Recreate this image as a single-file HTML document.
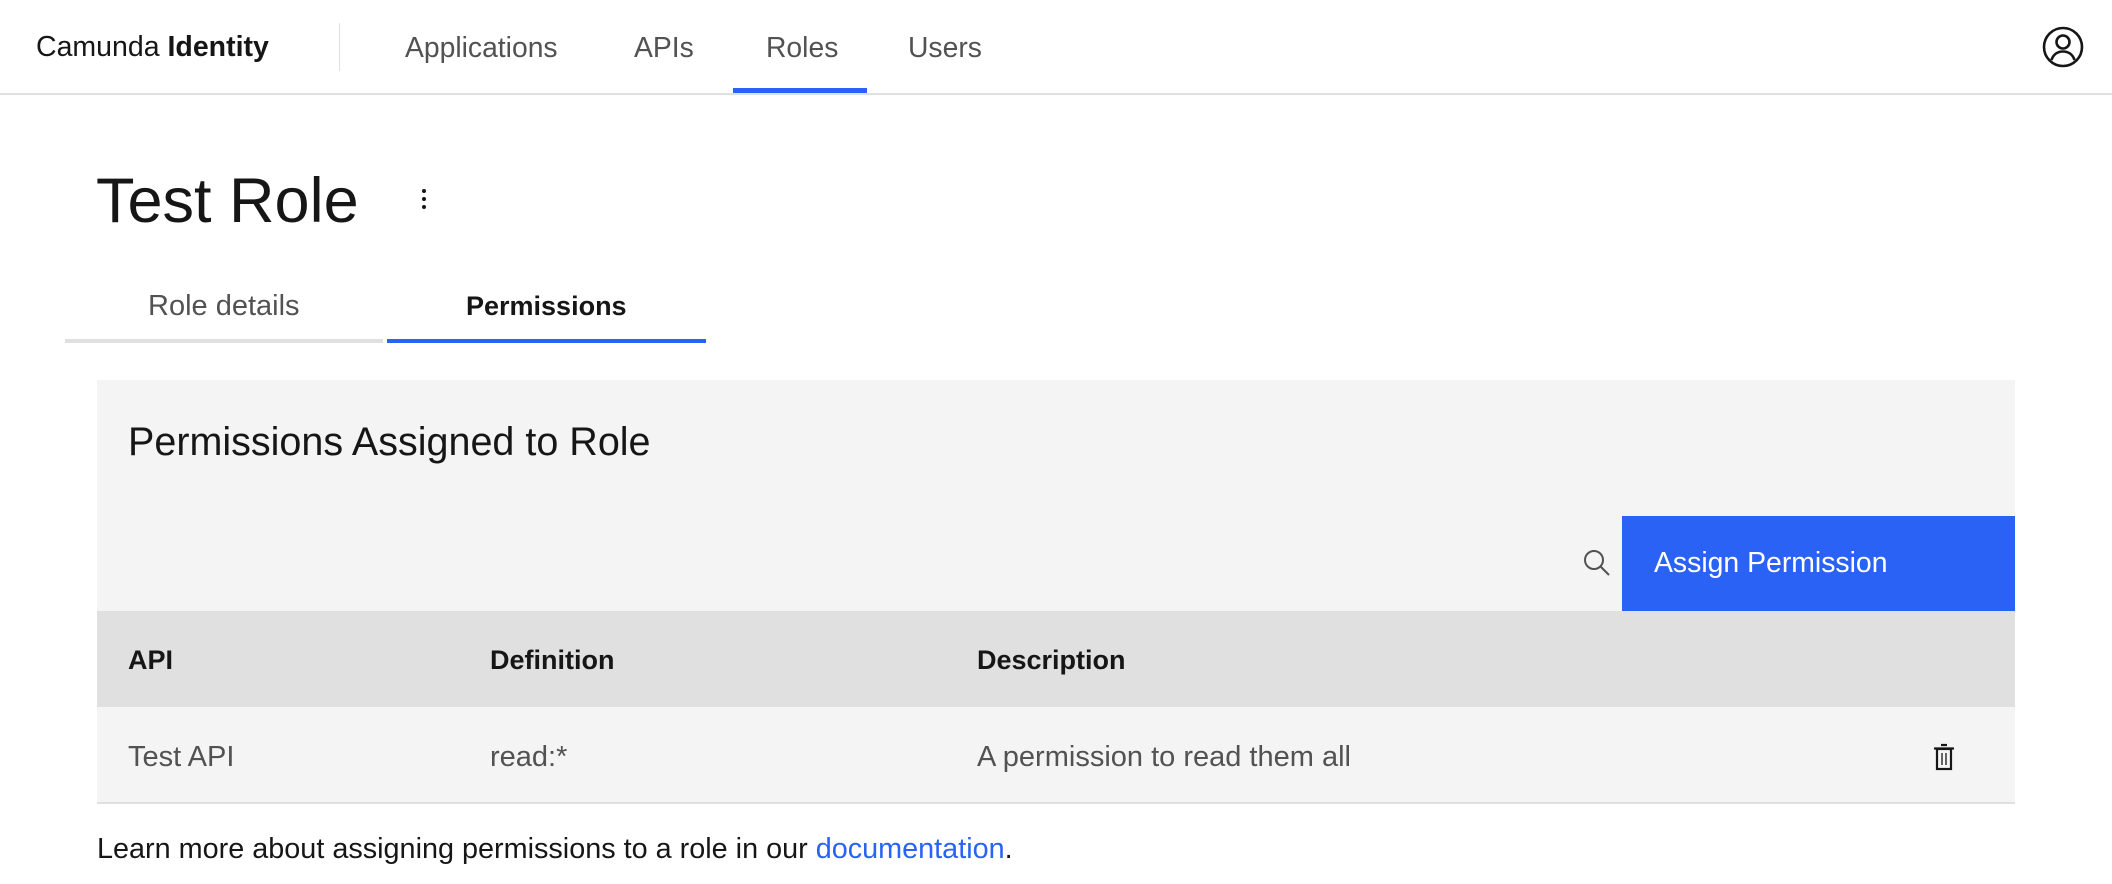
<!DOCTYPE html>
<html><head><meta charset="utf-8"><style>
*{margin:0;padding:0;box-sizing:border-box}
body{width:2112px;height:884px;background:#fff;font-family:"Liberation Sans",sans-serif;color:#161616;position:relative;overflow:hidden}
.a{position:absolute;white-space:nowrap;line-height:1}
.nav{font-size:28.3px;color:#525252;top:33px}
</style></head><body>
<div class="a" style="left:0;top:93px;width:2112px;height:2px;background:#e0e0e0"></div>
<div class="a" style="left:36px;top:33px;font-size:28.5px">Camunda <b>Identity</b></div>
<div class="a" style="left:339px;top:23px;width:1px;height:48px;background:#e0e0e0"></div>
<div class="a nav" style="left:405px">Applications</div>
<div class="a nav" style="left:634px">APIs</div>
<div class="a nav" style="left:766px">Roles</div>
<div class="a nav" style="left:908px">Users</div>
<div class="a" style="left:733px;top:88px;width:134px;height:5px;background:#2962f5"></div>
<svg class="a" style="left:2042px;top:26px" width="42" height="42" viewBox="0 0 42 42"><circle cx="21" cy="21" r="19" fill="none" stroke="#161616" stroke-width="2.6"/><circle cx="21" cy="16" r="6.5" fill="none" stroke="#161616" stroke-width="2.6"/><path d="M9.5 34c2-6 6.5-8.5 11.5-8.5s9.5 2.5 11.5 8.5" fill="none" stroke="#161616" stroke-width="2.6"/></svg>
<div class="a" style="left:96px;top:170px;font-size:63px">Test Role</div>
<svg class="a" style="left:418px;top:188px" width="12" height="24"><circle cx="6" cy="3" r="2" fill="#161616"/><circle cx="6" cy="11" r="2" fill="#161616"/><circle cx="6" cy="19" r="2" fill="#161616"/></svg>
<div class="a" style="left:148px;top:292px;font-size:29px;color:#525252">Role details</div>
<div class="a" style="left:466px;top:293px;font-size:27px;font-weight:bold">Permissions</div>
<div class="a" style="left:65px;top:339px;width:318px;height:4px;background:#e0e0e0"></div>
<div class="a" style="left:387px;top:339px;width:319px;height:4px;background:#2962f5"></div>
<div class="a" style="left:97px;top:380px;width:1918px;height:424px;background:#f4f4f4"></div>
<div class="a" style="left:128px;top:423px;font-size:39.5px">Permissions Assigned to Role</div>
<svg class="a" style="left:1582px;top:548px" width="30" height="30" viewBox="0 0 30 30"><circle cx="12" cy="12" r="9" fill="none" stroke="#525252" stroke-width="2"/><path d="M18.5 18.5L27 27" stroke="#525252" stroke-width="2"/></svg>
<div class="a" style="left:1622px;top:516px;width:393px;height:95px;background:#2962f5"></div>
<div class="a" style="left:1654px;top:549px;font-size:28.4px;color:#fff">Assign Permission</div>
<div class="a" style="left:97px;top:611px;width:1918px;height:96px;background:#e0e0e0"></div>
<div class="a" style="left:128px;top:647px;font-size:27px;font-weight:bold">API</div>
<div class="a" style="left:490px;top:647px;font-size:27px;font-weight:bold">Definition</div>
<div class="a" style="left:977px;top:647px;font-size:27px;font-weight:bold">Description</div>
<div class="a" style="left:97px;top:802px;width:1918px;height:2px;background:#e0e0e0"></div>
<div class="a" style="left:128px;top:743px;font-size:29px;color:#525252">Test API</div>
<div class="a" style="left:490px;top:743px;font-size:29px;color:#525252">read:*</div>
<div class="a" style="left:977px;top:743px;font-size:29px;color:#525252">A permission to read them all</div>
<svg class="a" style="left:1932px;top:743px" width="24" height="28" viewBox="0 0 24 28"><path d="M9 2h6M2 5.5h20" stroke="#161616" stroke-width="2.2"/><rect x="5" y="6" width="14" height="20" fill="none" stroke="#161616" stroke-width="2.2"/><path d="M10 10v12M14 10v12" stroke="#161616" stroke-width="1.3"/></svg>
<div class="a" style="left:97px;top:835px;font-size:28.8px">Learn more about assigning permissions to a role in our <span style="color:#2962f5">documentation</span>.</div>
</body></html>
